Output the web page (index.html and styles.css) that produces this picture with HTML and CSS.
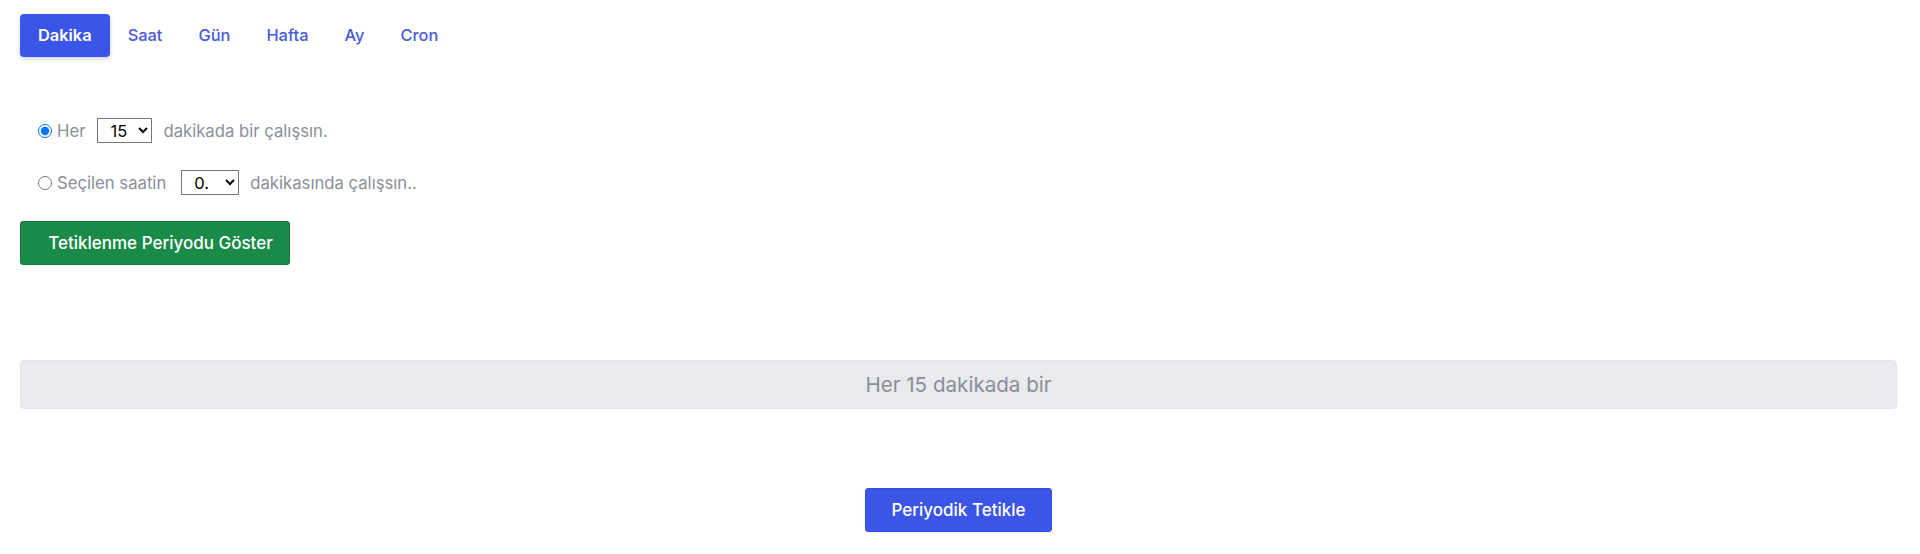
FILE: index.html
```html
<!DOCTYPE html>
<html lang="tr">
<head>
<meta charset="utf-8">
<title>Cron</title>
<link rel="stylesheet" href="styles.css">
</head>
<body>
<div class="page">
  <nav class="tabs">
    <span class="tab active">Dakika</span>
    <span class="tab">Saat</span>
    <span class="tab">Gün</span>
    <span class="tab">Hafta</span>
    <span class="tab">Ay</span>
    <span class="tab">Cron</span>
  </nav>

  <form class="options">
    <label class="opt">
      <input type="radio" name="m" checked>
      <span class="lbl">Her</span>
      <select class="sel sel-a"><option>15</option></select>
      <span class="lbl">dakikada bir çalışsın.</span>
    </label>
    <label class="opt">
      <input type="radio" name="m">
      <span class="lbl">Seçilen saatin</span>
      <select class="sel sel-b"><option>0.</option></select>
      <span class="lbl">dakikasında çalışsın..</span>
    </label>
  </form>

  <button class="btn btn-green" type="button">Tetiklenme Periyodu Göster</button>

  <div class="result">Her 15 dakikada bir</div>

  <div class="footer">
    <button class="btn btn-blue" type="button">Periyodik Tetikle</button>
  </div>
</div>
</body>
</html>
```

FILE: styles.css
```css
* { box-sizing: border-box; }
html, body { margin: 0; padding: 0; background: #fff; }
body {
  font-family: Inter, "Noto Sans", "Liberation Sans", sans-serif;
  color: #8a8f98;
}
.page {
  padding: 14px 23px 0 20px;
}
.tabs {
  display: flex;
  align-items: center;
  height: 43px;
}
.tab {
  display: block;
  padding: 0 18px;
  line-height: 43px;
  font-size: 16.4px;
  font-weight: 500;
  color: #4a5bd8;
}
.tab.active {
  background: #3b55e6;
  color: #fff;
  font-weight: 600;
  border-radius: 4px;
  box-shadow: 0 2px 4px rgba(59, 85, 230, 0.25);
}
.options {
  margin-top: 61px;
  padding-left: 13px;
  display: flex;
  flex-direction: column;
  gap: 27px;
}
.opt {
  display: flex;
  align-items: center;
  height: 25px;
  font-size: 16.7px;
  color: #8a8f98;
}
.opt input[type="radio"] {
  width: 14px;
  height: 14px;
  margin: 0 5px 0 5px;
}
.lbl { white-space: nowrap; }
.sel {
  height: 25px;
  margin: 0 11px 0 12px;
  font-family: Inter, "Liberation Sans", Arial, sans-serif;
  font-size: 16.5px;
  color: #000;
  background: #fff;
  border: 1px solid #767676;
  border-radius: 0;
  padding: 0 2px 0 8px;
}
.sel-a { width: 55px; }
.sel-b { width: 58px; margin-left: 15px; }
.btn {
  font-family: Inter, "Noto Sans", "Liberation Sans", sans-serif;
  font-size: 17px;
  font-weight: 500;
  color: #fff;
  border-radius: 3px;
  cursor: pointer;
  height: 44px;
  padding: 0;
}
.btn-green {
  display: block;
  margin-top: 26px;
  width: 270px;
  padding-left: 11px;
  background: #198a47;
  border: 1px solid #137a3c;
}
.result {
  margin-top: 95px;
  height: 49px;
  background: #e9eaed;
  border: 1px solid #e3e5e8;
  border-radius: 4px;
  display: flex;
  align-items: center;
  justify-content: center;
  font-size: 20.6px;
  color: #8a8f99;
}
.footer {
  display: flex;
  justify-content: center;
  margin-top: 79px;
}
.btn-blue {
  width: 187px;
  background: #3b55e6;
  border: 1px solid #3550de;
}
```
